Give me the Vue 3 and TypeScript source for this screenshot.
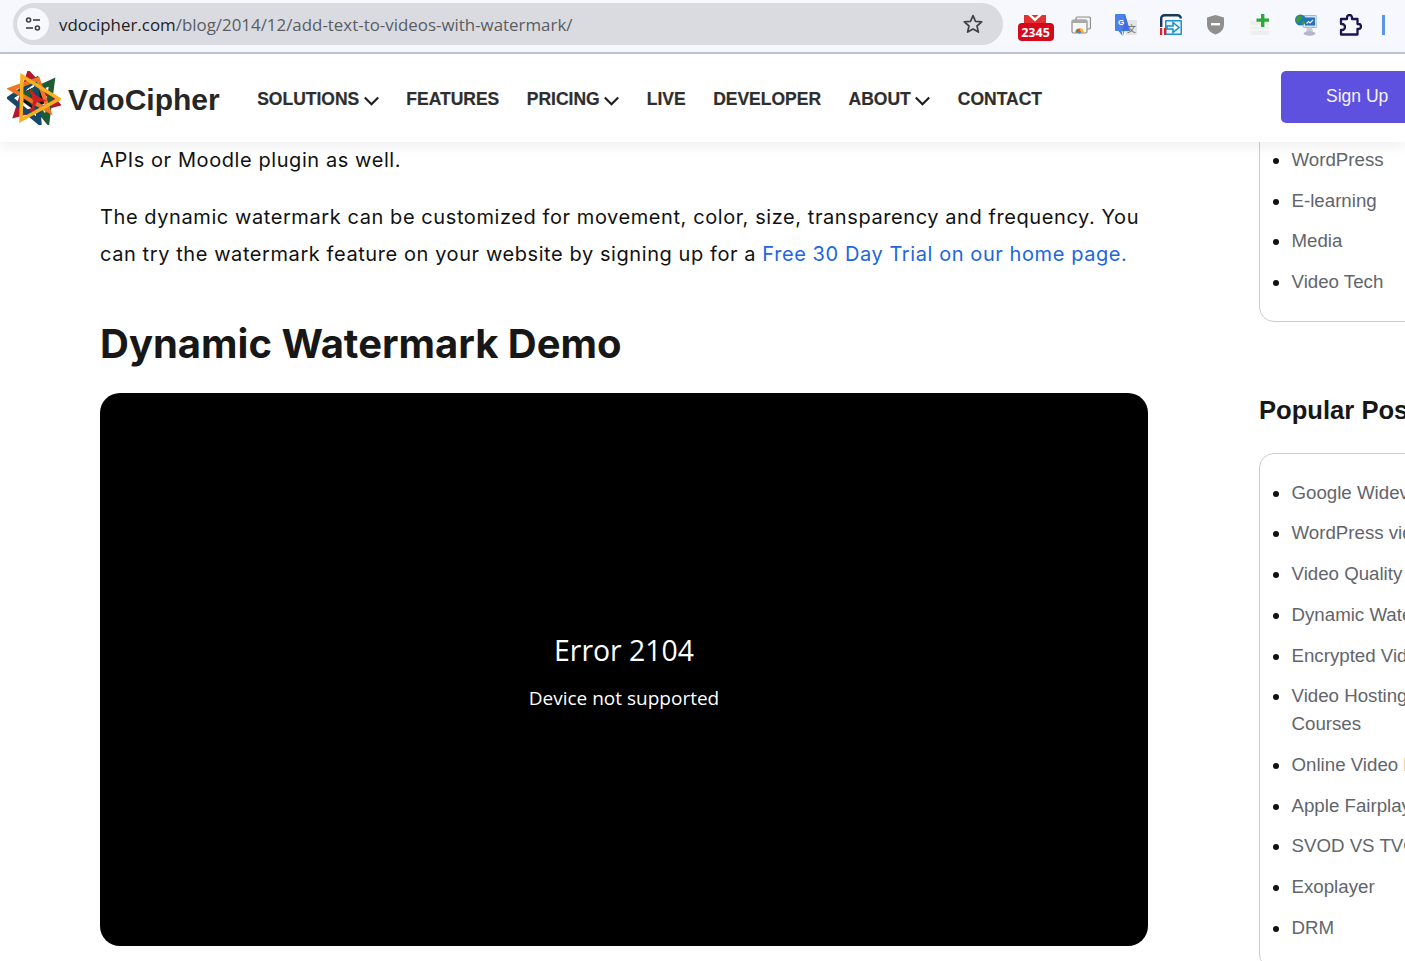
<script setup lang="ts">
const navItems = [
  { label: 'SOLUTIONS', caret: true },
  { label: 'FEATURES', caret: false },
  { label: 'PRICING', caret: true },
  { label: 'LIVE', caret: false },
  { label: 'DEVELOPER', caret: false },
  { label: 'ABOUT', caret: true },
  { label: 'CONTACT', caret: false },
]
const categories = ['WordPress', 'E-learning', 'Media', 'Video Tech']
const popular = [
  'Google Widevine DRM',
  'WordPress video plugin',
  'Video Quality Metrics',
  'Dynamic Watermark',
  'Encrypted Video Streaming',
  'Video Hosting for Online Courses',
  'Online Video Player',
  'Apple Fairplay DRM',
  'SVOD VS TVOD VS AVOD',
  'Exoplayer',
  'DRM',
]
</script>

<template>
  <div class="page">
    <div class="chrome">
      <div class="omnibox">
        <span class="tune">
          <svg width="18" height="18" viewBox="0 0 18 18" fill="none" stroke="#3c4043" stroke-width="1.6">
            <circle cx="4.6" cy="5" r="2" />
            <path d="M9 5h7" />
            <path d="M2 13h7" />
            <circle cx="13.4" cy="13" r="2" />
          </svg>
        </span>
        <span class="url"><span class="host">vdocipher.com</span>/blog/2014/12/add-text-to-videos-with-watermark/</span>
        <svg class="star" width="22" height="22" viewBox="0 0 22 22" fill="none" stroke="#3f4246" stroke-width="1.7" stroke-linejoin="round">
          <path d="M11 2.6l2.5 5.7 6.2.6-4.7 4.1 1.4 6.1-5.4-3.2-5.4 3.2 1.4-6.1-4.7-4.1 6.2-.6z" />
        </svg>
      </div>
      <div class="exts">
        <span class="slot slot-2345">
          <svg width="36" height="28" viewBox="0 0 36 28">
            <rect x="6" y="1" width="22" height="12" fill="#e0322f" />
            <path d="M10 1l7 6.500L24 1h-3.500L17 4l-3.500-3z" fill="#fff" />
            <rect x="0" y="9" width="36" height="18" rx="4" fill="#d5091b" />
            <text x="17.500" y="22.800" text-anchor="middle" class="badge-text">2345</text>
          </svg>
        </span>
        <span class="slot">
          <svg width="20" height="18" viewBox="0 0 20 18">
            <rect x="5" y="1" width="14.500" height="12" rx="1.500" fill="#f2f2f2" stroke="#8d8d8d" stroke-width="1.200" />
            <rect x="1" y="4" width="15" height="13" rx="1.500" fill="#f7f7f7" stroke="#8d8d8d" stroke-width="1.200" />
            <rect x="1" y="4" width="15" height="3" fill="#a9a9a9" />
            <path d="M4.500 16.500a4 4 0 0 1 8 0z" fill="#e8453c" />
            <path d="M8.500 12.500a4 4 0 0 1 4 4h-3z" fill="#fbbc05" />
            <path d="M4.500 16.500a4 4 0 0 1 1.200-2.800l2 2.800z" fill="#34a853" />
            <circle cx="8.500" cy="16" r="1.600" fill="#4285f4" />
          </svg>
        </span>
        <span class="slot">
          <svg width="22" height="22" viewBox="0 0 22 22">
            <path d="M8 6h13a1 1 0 0 1 1 1v13a1 1 0 0 1-1 1H11z" fill="#e4e4e4" />
            <text x="16.500" y="18" text-anchor="middle" class="zh-text">文</text>
            <path d="M1 0h9l5 17H6.500l1 5-4-5H1a1 1 0 0 1-1-1V1a1 1 0 0 1 1-1z" fill="#4a80ea" />
            <path d="M10 0l5 17H9.500L8 22l-.5-5z" fill="#3b6ad0" opacity="0.7" />
            <text x="6" y="10.500" text-anchor="middle" class="g-text">G</text>
          </svg>
        </span>
        <span class="slot">
          <svg width="22" height="21" viewBox="0 0 22 21" fill="none">
            <path d="M1.200 13V4.500a3.300 3.300 0 0 1 3.300-3.300h13a3.300 3.300 0 0 1 3.300 3.300" stroke="#16395c" stroke-width="2.400" />
            <rect x="5" y="6" width="17" height="15" rx="1" fill="#1e90cf" />
            <rect x="6.500" y="7.500" width="14" height="12" fill="#e6f3fb" />
            <path d="M7 12h6V8.500l6 5-6 5V15H7z" fill="#fff" stroke="#178ccb" stroke-width="1.500" />
            <path d="M0 14h2.200v7H0zM4 14h2.200v7H4z" fill="#d8232a" />
          </svg>
        </span>
        <span class="slot">
          <svg width="19" height="21" viewBox="0 0 19 21">
            <path d="M9.500 1l8.500 2.500v7c0 5-3.500 8.500-8.500 10C4.500 19 1 15.500 1 10.500v-7z" fill="#8f8f8f" />
            <rect x="5" y="9" width="9" height="2.400" fill="#fff" />
          </svg>
        </span>
        <span class="slot">
          <svg width="21" height="21" viewBox="0 0 21 21">
            <path d="M0 7h14l5 2v12H1z" fill="#eeeeee" />
            <path d="M1 12h18M1 16h18" stroke="#f8f8f8" stroke-width="1.500" />
            <path d="M11 0h3.400v4.400H19v3.300h-4.600V13H11V7.700H6.500V4.400H11z" fill="#2aa838" />
          </svg>
        </span>
        <span class="slot">
          <svg width="22" height="22" viewBox="0 0 22 22">
            <rect x="8" y="1.500" width="14" height="12" rx="1.500" fill="#cfe3f3" stroke="#95b8d4" />
            <rect x="10" y="3.500" width="10" height="8" fill="#2a6fb8" />
            <path d="M11.500 9.500l2-2 1.500 1.500 3-3" stroke="#e7f4fb" stroke-width="1.100" fill="none" />
            <path d="M12 13.500h5l1 4.500h-7z" fill="#c8cbdb" />
            <ellipse cx="14.500" cy="19.500" rx="6" ry="2.200" fill="#b3b5cb" />
            <circle cx="5.500" cy="6" r="5.500" fill="#1c7bb8" />
            <path d="M3 2c2-1 4 0 4 2S4 6 4 8 1 8 1 6s1-3 2-4zM7 8c1-1 3-1 3 0s-2 3-3 2z" fill="#3f9b3a" />
          </svg>
        </span>
        <span class="slot">
          <svg width="23" height="22" viewBox="0 0 23 22" fill="none" stroke="#1b1650" stroke-width="2.300" stroke-linejoin="round">
            <path d="M2 5h6V3.500a2.500 2.500 0 0 1 5 0V5h5.500v5h1a2.500 2.500 0 0 1 0 5h-1v5.500H2V16h1a3 3 0 0 0 0-6H2z" />
          </svg>
        </span>
        <span class="profile-line"></span>
      </div>
    </div>

    <header class="site-header">
      <div class="brand">
        <svg width="54" height="54" viewBox="0 0 54 54" fill="none">
          <path d="M19 20 33 13 41 30 27 39 16 31z" fill="#0e1a20" />
          <path d="M22 3 50 33 9 44z" stroke="#b5182b" stroke-width="5" />
          <path d="M45 11 40 49 19 23z" stroke="#1e5a34" stroke-width="5.500" />
          <path d="M3 27 32 51 29 9z" stroke="#15496a" stroke-width="5" />
          <path d="M4 18 31 8 42 40z" stroke="#ef7622" stroke-width="4" />
          <path d="M15 5 52 28 14 49z" stroke="#f7b021" stroke-width="3.500" />
          <path d="M22 17 30 25 40 30 30 31 24 42 26 30z" fill="#cf1d23" />
        </svg>
        <span class="brand-name">VdoCipher</span>
      </div>
      <nav class="nav">
        <span v-for="item in navItems" :key="item.label" class="nav-item">
          {{ item.label }}
          <svg v-if="item.caret" width="15" height="10" viewBox="0 0 15 10" fill="none" stroke="#1c1c1c" stroke-width="2.100">
            <path d="M.8 1.500 7.500 8.200l6.700-6.700" />
          </svg>
        </span>
      </nav>
      <button class="signup" type="button">Sign Up</button>
    </header>

    <main class="main">
      <article class="article">
        <p class="first">APIs or Moodle plugin as well.</p>
        <p class="second">
          The dynamic watermark can be customized for movement, color, size, transparency and frequency. You can try the watermark feature on your website by signing up for a
          <a class="link">Free 30 Day Trial on our home page.</a>
        </p>
        <h2 class="title">Dynamic Watermark Demo</h2>
        <div class="player">
          <div class="err-code">Error 2104</div>
          <div class="err-msg">Device not supported</div>
        </div>
      </article>
      <aside class="side">
        <ul class="card card-top">
          <li v-for="c in categories" :key="c">{{ c }}</li>
        </ul>
        <h3 class="side-title">Popular Posts</h3>
        <ul class="card card-pop">
          <li v-for="p in popular" :key="p">{{ p }}</li>
        </ul>
      </aside>
    </main>
  </div>
</template>

<style scoped>
.page {
  width: 1405px;
  height: 961px;
  overflow: hidden;
  background: #fff;
  font-family: Inter, "Liberation Sans", sans-serif;
  color: #111;
}
.chrome {
  height: 52px;
  background: #f6f8fd;
  border-bottom: 2px solid #c4c3d6;
  display: flex;
  align-items: center;
}
.omnibox {
  margin-left: 13px;
  width: 990px;
  height: 42px;
  margin-top: -4px;
  background: #d9dbe1;
  border-radius: 21px;
  display: flex;
  align-items: center;
  flex: none;
}
.tune {
  margin-left: 4px;
  width: 32px;
  height: 32px;
  border-radius: 50%;
  background: #f7f8fc;
  display: flex;
  align-items: center;
  justify-content: center;
  margin-right: 10px;
}
.url {
  font-family: "Open Sans", sans-serif;
  font-size: 16.900px;
  color: #5a5d63;
  flex: 1;
  white-space: nowrap;
}
.host {
  color: #1f2125;
}
.star {
  margin-right: 19px;
}
.exts {
  display: flex;
  align-items: center;
  margin-left: 10px;
  margin-top: -3px;
}
.slot {
  width: 45px;
  display: flex;
  justify-content: center;
  align-items: center;
  flex: none;
}
.slot svg {
  display: block;
}
.slot-2345 svg {
  margin-top: 7px;
}
.badge-text {
  font: 700 12.500px "Open Sans", sans-serif;
  fill: #fff;
}
.g-text {
  font: 700 8px "Liberation Sans", sans-serif;
  fill: #fff;
}
.zh-text {
  font: 400 9px "Noto Sans CJK SC", sans-serif;
  fill: #666;
}
.profile-line {
  width: 2.500px;
  height: 20px;
  background: #5c94ea;
  margin-left: 9px;
  flex: none;
}
.site-header {
  position: relative;
  z-index: 2;
  height: 88px;
  background: #fff;
  box-shadow: 0 4px 14px rgba(0, 0, 0, 0.07);
  display: flex;
  align-items: center;
}
.brand {
  display: flex;
  align-items: center;
  margin-left: 7px;
  margin-top: 0;
  gap: 7px;
  flex: none;
}
.brand-name {
  font-family: "Liberation Sans", sans-serif;
  font-weight: 700;
  font-size: 30px;
  color: #262626;
  margin-top: 3px;
}
.nav {
  display: flex;
  gap: 27.500px;
  margin-left: 37.500px;
  margin-top: 3px;
}
.nav-item {
  display: flex;
  align-items: center;
  gap: 4.500px;
  font-family: "Liberation Sans", sans-serif;
  font-weight: 700;
  font-size: 17.500px;
  color: #2e2e2e;
  -webkit-text-stroke: 0.2px #2e2e2e;
}
.nav-item svg {
  margin-top: 3px;
}
.signup {
  position: absolute;
  left: 1281px;
  top: 17px;
  width: 130px;
  height: 52px;
  border: 0;
  border-radius: 5px;
  background: #5f51e0;
  color: #f4f3ff;
  font-family: "Liberation Sans", sans-serif;
  font-size: 17.500px;
  text-align: left;
  padding-left: 45px;
  padding-bottom: 2px;
}
.main {
  display: flex;
  height: 819px;
  overflow: hidden;
}
.article {
  margin-left: 100px;
  width: 1048px;
  flex: none;
}
.article p {
  margin: 0;
  font-size: 20px;
  line-height: 37px;
  letter-spacing: 0.58px;
}
.article .second {
  margin-top: 20px;
}
.link {
  color: #2166e0;
}
.title {
  margin: 46px 0 24px;
  font-size: 40px;
  line-height: 50px;
  font-weight: 700;
  color: #171717;
}
.player {
  height: 553px;
  background: #000;
  border-radius: 20px;
  color: #fff;
  display: flex;
  flex-direction: column;
  align-items: center;
  justify-content: center;
  font-family: "Open Sans", sans-serif;
}
.err-code {
  font-size: 28.400px;
  line-height: 40px;
  margin-top: 4px;
}
.err-msg {
  font-size: 19px;
  line-height: 30px;
  margin-top: 13px;
}
.side {
  margin-left: 111px;
  width: 300px;
  flex: none;
}
.card {
  margin: 0;
  list-style: none;
  padding: 0 0 0 31.500px;
  border: 1px solid #ccc;
  border-radius: 15px;
  font-family: "Liberation Sans", sans-serif;
  font-size: 18.700px;
  color: #62656b;
}
.card li {
  position: relative;
  line-height: 28px;
  margin-bottom: 12.700px;
}
.card li::before {
  content: "";
  position: absolute;
  left: -18.500px;
  top: 12px;
  width: 6px;
  height: 6px;
  border-radius: 50%;
  background: #111;
}
.card-top {
  margin-top: -40px;
  padding-top: 43px;
  padding-bottom: 12px;
}
.side-title {
  margin: 71px 0 26px;
  font-family: "Liberation Sans", sans-serif;
  font-size: 25.600px;
  line-height: 34px;
  font-weight: 700;
  color: #171717;
  white-space: nowrap;
}
.card-pop {
  padding-top: 25px;
  padding-bottom: 14px;
}
</style>

<style>
html, body {
  margin: 0;
  overflow: hidden;
}
</style>
